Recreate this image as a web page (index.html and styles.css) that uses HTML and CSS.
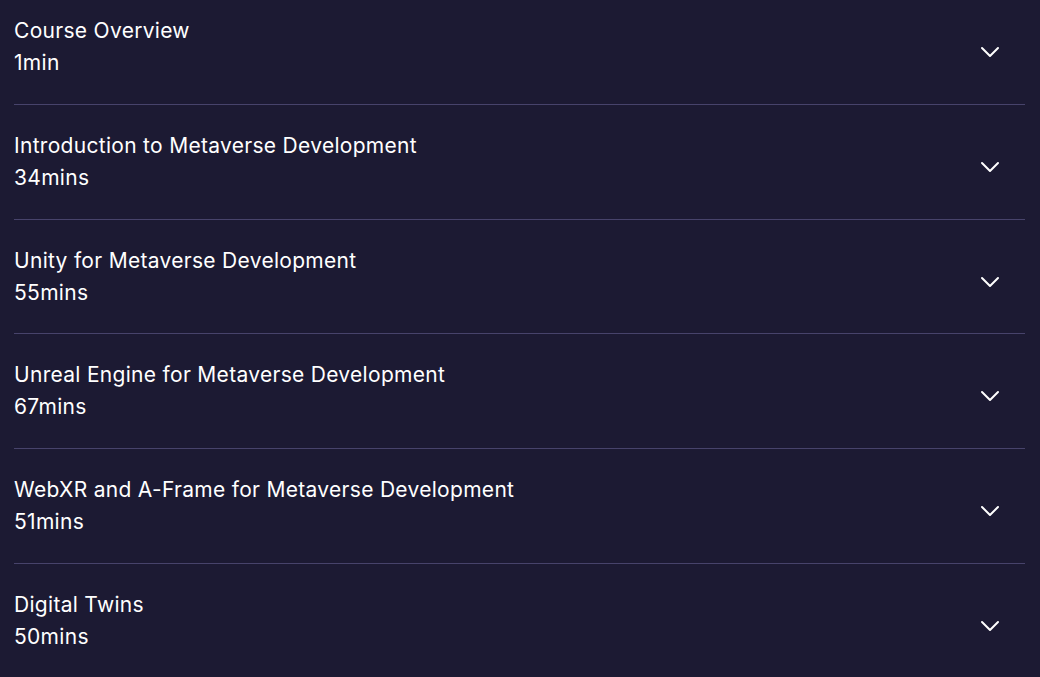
FILE: index.html
```html
<!DOCTYPE html>
<html lang="en">
<head>
    <meta charset="UTF-8">
    <title>Course Content</title>
    <link rel="stylesheet" href="styles.css">
</head>
<body>
    <div class="curriculum">
        <div class="module">
            <div class="module-info">
                <div class="module-title">Course Overview</div>
                <div class="module-length">1min</div>
            </div>
            <svg class="chevron" viewBox="0 0 24 24"><path d="M4 8l8 8 8-8"/></svg>
        </div>
        <div class="module">
            <div class="module-info">
                <div class="module-title">Introduction to Metaverse Development</div>
                <div class="module-length">34mins</div>
            </div>
            <svg class="chevron" viewBox="0 0 24 24"><path d="M4 8l8 8 8-8"/></svg>
        </div>
        <div class="module">
            <div class="module-info">
                <div class="module-title">Unity for Metaverse Development</div>
                <div class="module-length">55mins</div>
            </div>
            <svg class="chevron" viewBox="0 0 24 24"><path d="M4 8l8 8 8-8"/></svg>
        </div>
        <div class="module">
            <div class="module-info">
                <div class="module-title">Unreal Engine for Metaverse Development</div>
                <div class="module-length">67mins</div>
            </div>
            <svg class="chevron" viewBox="0 0 24 24"><path d="M4 8l8 8 8-8"/></svg>
        </div>
        <div class="module">
            <div class="module-info">
                <div class="module-title">WebXR and A-Frame for Metaverse Development</div>
                <div class="module-length">51mins</div>
            </div>
            <svg class="chevron" viewBox="0 0 24 24"><path d="M4 8l8 8 8-8"/></svg>
        </div>
        <div class="module">
            <div class="module-info">
                <div class="module-title">Digital Twins</div>
                <div class="module-length">50mins</div>
            </div>
            <svg class="chevron" viewBox="0 0 24 24"><path d="M4 8l8 8 8-8"/></svg>
        </div>
    </div>
</body>
</html>
```

FILE: styles.css
```css
body {
    margin: 0;
    background-color: #1c1a33;
    font-family: Inter, "Noto Sans", sans-serif;
    color: #ffffff;
}
/* list is scrolled a little, so the first row is cut at the top */
.curriculum {
    margin-top: -10px;
    padding: 0 15px 0 14px;
}
.module {
    display: flex;
    align-items: center;
    justify-content: space-between;
    padding: 25px 0 24.75px;
    border-bottom: 1px solid #47436b;
}
.module-title,
.module-length {
    font-size: 21px;
    line-height: 32px;
    letter-spacing: 0.3px;
}
.chevron {
    width: 24px;
    height: 24px;
    margin: 10px 23px 0 0;
    fill: none;
    stroke: #ffffff;
    stroke-width: 2;
    stroke-linecap: round;
    stroke-linejoin: round;
}
```
